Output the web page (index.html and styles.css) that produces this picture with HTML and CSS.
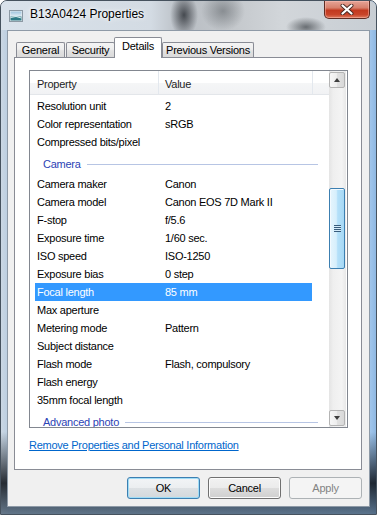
FILE: index.html
```html
<!DOCTYPE html>
<html lang="en">
<head>
    <meta charset="UTF-8">
    <meta name="viewport" content="width=device-width, initial-scale=1.0">
    <title>B13A0424 Properties</title>
    <link rel="stylesheet" href="styles.css">
</head>
<body>
    <div class="window">
        <div class="titlebar">
            <svg class="app-icon" width="14" height="12" viewBox="0 0 14 12">
                <defs>
                    <linearGradient id="sky" x1="0" y1="0" x2="0" y2="1">
                        <stop offset="0" stop-color="#9fc4de"/>
                        <stop offset="1" stop-color="#e4eef5"/>
                    </linearGradient>
                </defs>
                <rect x="0.5" y="0.5" width="13" height="11" fill="#e8edf1" stroke="#8c99a4"/>
                <rect x="1.5" y="1.5" width="11" height="5" fill="url(#sky)"/>
                <rect x="1.5" y="6.5" width="11" height="4" fill="#2f7a86"/>
                <path d="M1.5 7.5 L7 6.5 L12.5 8" stroke="#d8ecef" stroke-width="1" fill="none"/>
            </svg>
            <span class="title">B13A0424 Properties</span>
            <div class="close">
                <svg width="14" height="11" viewBox="0 0 14 11">
                    <path d="M2.5 1.5 L11.5 9.5 M11.5 1.5 L2.5 9.5" stroke="#4a2a24" stroke-width="4" stroke-linecap="round"/>
                    <path d="M2.5 1.5 L11.5 9.5 M11.5 1.5 L2.5 9.5" stroke="#ffffff" stroke-width="2.2" stroke-linecap="round"/>
                </svg>
            </div>
        </div>

        <div class="client">
            <div class="tabs">
                <div class="tab tab-general">General</div>
                <div class="tab tab-security">Security</div>
                <div class="tab tab-details selected">Details</div>
                <div class="tab tab-versions">Previous Versions</div>
            </div>

            <div class="panel">
                <div class="listview">
                    <div class="list-body">
                        <div class="list-header">
                            <div class="col-prop">Property</div>
                            <div class="col-value">Value</div>
                            <div class="col-rest"></div>
                        </div>
                        <div class="rows">
                            <div class="row"><span>Resolution unit</span><span>2</span></div>
                            <div class="row"><span>Color representation</span><span>sRGB</span></div>
                            <div class="row"><span>Compressed bits/pixel</span><span></span></div>
                            <div class="group"><span>Camera</span></div>
                            <div class="row"><span>Camera maker</span><span>Canon</span></div>
                            <div class="row"><span>Camera model</span><span>Canon EOS 7D Mark II</span></div>
                            <div class="row"><span>F-stop</span><span>f/5.6</span></div>
                            <div class="row"><span>Exposure time</span><span>1/60 sec.</span></div>
                            <div class="row"><span>ISO speed</span><span>ISO-1250</span></div>
                            <div class="row"><span>Exposure bias</span><span>0 step</span></div>
                            <div class="row selected"><span>Focal length</span><span>85 mm</span></div>
                            <div class="row"><span>Max aperture</span><span></span></div>
                            <div class="row"><span>Metering mode</span><span>Pattern</span></div>
                            <div class="row"><span>Subject distance</span><span></span></div>
                            <div class="row"><span>Flash mode</span><span>Flash, compulsory</span></div>
                            <div class="row"><span>Flash energy</span><span></span></div>
                            <div class="row"><span>35mm focal length</span><span></span></div>
                            <div class="group"><span>Advanced photo</span></div>
                        </div>
                    </div>
                    <div class="scrollbar">
                        <div class="scroll-btn"><span class="arrow-up"></span></div>
                        <div class="scroll-track">
                            <div class="scroll-thumb"><span class="grip"></span></div>
                        </div>
                        <div class="scroll-btn"><span class="arrow-down"></span></div>
                    </div>
                </div>
                <a class="remove-link" href="#">Remove Properties and Personal Information</a>
            </div>

            <div class="buttons">
                <button class="btn btn-default">OK</button>
                <button class="btn">Cancel</button>
                <button class="btn" disabled>Apply</button>
            </div>
        </div>
    </div>
</body>
</html>
```

FILE: styles.css
```css
* {
    box-sizing: border-box;
}
body {
    margin: 0;
    font-family: "Liberation Sans", Arial, sans-serif;
    font-size: 11px;
    letter-spacing: -0.25px;
    color: #000;
}
.window {
    width: 377px;
    height: 515px;
    display: flex;
    flex-direction: column;
    border: 1px solid #46525e;
    border-radius: 7px 7px 0 0;
    overflow: hidden;
    background:
        linear-gradient(to bottom, rgba(0, 0, 0, 0) 84%, rgba(10, 14, 20, 0.85) 94%, rgba(60, 80, 100, 0.7) 100%),
        linear-gradient(to right, #cbd7e3 0, #b9cde0 2%, #a9c4df 50%, #a5c9ee 98%, #8fb8e2 100%);
}
.titlebar {
    height: 29px;
    flex: none;
    display: flex;
    align-items: flex-start;
    background:
        radial-gradient(ellipse 14px 22px at 183px 14px, rgba(40, 44, 50, 0.8), rgba(40, 44, 50, 0) 100%),
        radial-gradient(ellipse 22px 20px at 222px 10px, rgba(90, 95, 100, 0.55), rgba(90, 95, 100, 0) 100%),
        radial-gradient(ellipse 20px 10px at 305px 26px, rgba(50, 55, 60, 0.65), rgba(50, 55, 60, 0) 100%),
        linear-gradient(to right, #d9e2eb 0, #d3dbe3 40%, #b9bec4 48%, #c4c8cc 62%, #d2d6da 75%, #c8ced4 100%);
}
.app-icon {
    margin: 9px 0 0 8px;
    flex: none;
}
.title {
    margin: 6px 0 0 7px;
    font-size: 12px;
    line-height: 15px;
    letter-spacing: 0;
    text-shadow: 0 0 6px #fff, 0 0 3px #fff;
}
.close {
    margin-left: auto;
    margin-right: 6px;
    width: 46px;
    height: 18px;
    flex: none;
    display: flex;
    align-items: center;
    justify-content: center;
    border: 1px solid #5e2c23;
    border-top: none;
    border-radius: 0 0 5px 5px;
    background: linear-gradient(to bottom, #e6a497 0%, #d7806c 40%, #c2391f 55%, #c9452a 80%, #de7b5f 100%);
    box-shadow: inset 0 0 0 1px rgba(255, 200, 190, 0.45);
}

/* dialog body */
.client {
    flex: 1;
    margin: 0 6px 7px 6px;
    border: 1px solid #8e9aa7;
    background: #f0f0f0;
    padding: 6px 7px 7px 6px;
    display: flex;
    flex-direction: column;
}
.tabs {
    height: 20px;
    display: flex;
    align-items: flex-end;
    position: relative;
    z-index: 1;
}
.tab {
    height: 15px;
    border: 1px solid #898c95;
    border-bottom: none;
    border-radius: 2px 2px 0 0;
    background: linear-gradient(to bottom, #f4f4f4 0%, #eeeeee 45%, #e2e2e2 55%, #dadada 100%);
    line-height: 14px;
    text-align: center;
    white-space: nowrap;
}
.tab-general {
    margin-left: 2px;
    width: 49px;
}
.tab-security {
    margin-left: 1px;
    width: 49px;
}
.tab-details {
    margin-left: -1px;
    width: 48px;
}
.tab-versions {
    width: 92px;
}
.tab.selected {
    height: 21px;
    margin-bottom: -1px;
    padding-top: 1px;
    background: #fff;
}
.panel {
    flex: 1;
    border: 1px solid #898c95;
    background: #fff;
    padding: 12px 13px 0 14px;
}

/* property list */
.listview {
    height: 358px;
    border: 1px solid #828790;
    display: flex;
}
.list-body {
    width: 299px;
    overflow: hidden;
}
.list-header {
    height: 24px;
    display: flex;
    border-bottom: 1px solid #e3e6ea;
    background: linear-gradient(to bottom, #ffffff 0%, #ffffff 50%, #f5f6f7 51%, #f1f2f4 100%);
    color: #1e1e1e;
}
.list-header div {
    padding-top: 3px;
    line-height: 20px;
}
.col-prop {
    width: 129px;
    padding-left: 7px;
    border-right: 1px solid #e3e8ee;
}
.col-value {
    width: 154px;
    padding-left: 6px;
    border-right: 1px solid #e3e8ee;
}
.col-rest {
    flex: 1;
}
.rows {
    padding-top: 2px;
}
.row {
    margin-left: 5px;
    width: 277px;
    height: 18px;
    padding-left: 2px;
    display: grid;
    grid-template-columns: 128px 1fr;
    line-height: 18px;
    white-space: nowrap;
}
.row.selected {
    background: #3399ff;
    color: #fff;
}
.group {
    width: 288px;
    height: 24px;
    padding: 2px 0 0 13px;
    display: flex;
    align-items: center;
    line-height: 22px;
    color: #2b43b5;
    white-space: nowrap;
}
.group::after {
    content: "";
    flex: 1;
    height: 1px;
    margin-left: 6px;
    background: #b7c5e4;
}

/* scrollbar */
.scrollbar {
    width: 17px;
    display: flex;
    flex-direction: column;
    padding: 1px 1px 1px 0;
    background: linear-gradient(to right, #e4e4e4 0%, #efefef 25%, #f4f4f4 75%, #e8e8e8 100%);
}
.scroll-btn {
    height: 16px;
    border: 1px solid #b4b4b4;
    border-radius: 2px;
    background: linear-gradient(to right, #f7f7f7 0%, #ededed 50%, #e1e1e1 51%, #d9d9d9 100%);
    display: flex;
    align-items: center;
    justify-content: center;
}
.arrow-up,
.arrow-down {
    width: 0;
    height: 0;
    border-left: 3.5px solid transparent;
    border-right: 3.5px solid transparent;
}
.arrow-up {
    border-bottom: 4px solid #3e3e3e;
}
.arrow-down {
    border-top: 4px solid #3e3e3e;
}
.scroll-track {
    flex: 1;
    padding-top: 100px;
}
.scroll-thumb {
    height: 81px;
    border: 1px solid #3c7fb1;
    border-radius: 2px;
    background: linear-gradient(to right, #e6f5fd 0%, #d6effc 45%, #b4e0f9 55%, #a6d8f5 100%);
    box-shadow: inset 1px 1px 0 #f2faff;
    display: flex;
    align-items: center;
    justify-content: center;
}
.grip {
    width: 7px;
    height: 7px;
    background: repeating-linear-gradient(to bottom, #385c7c 0, #385c7c 1px, #d4ecfa 1px, #d4ecfa 2px);
}

.remove-link {
    display: inline-block;
    margin-top: 10px;
    line-height: 15px;
    color: #0066cc;
    text-decoration: underline;
}

/* dialog buttons */
.buttons {
    margin-top: 7px;
    display: flex;
    justify-content: flex-end;
    gap: 8px;
}
.btn {
    width: 73px;
    height: 22px;
    padding: 0;
    font-family: "Liberation Sans", Arial, sans-serif;
    font-size: 11px;
    letter-spacing: -0.25px;
    color: #000;
    border: 1px solid #707070;
    border-radius: 3px;
    background: linear-gradient(to bottom, #f2f2f2 0%, #ebebeb 50%, #dddddd 51%, #cfcfcf 100%);
    box-shadow: inset 0 0 0 1px #fcfcfc;
}
.btn-default {
    border-color: #3c7fb1;
    box-shadow: inset 0 0 0 1px #9fdcf6;
    background: linear-gradient(to bottom, #f2f4f6 0%, #ebeef0 50%, #dde1e4 51%, #d3d8dc 100%);
}
.btn:disabled {
    border-color: #adb2b5;
    background: #f4f4f4;
    box-shadow: none;
    color: #838383;
}
```
